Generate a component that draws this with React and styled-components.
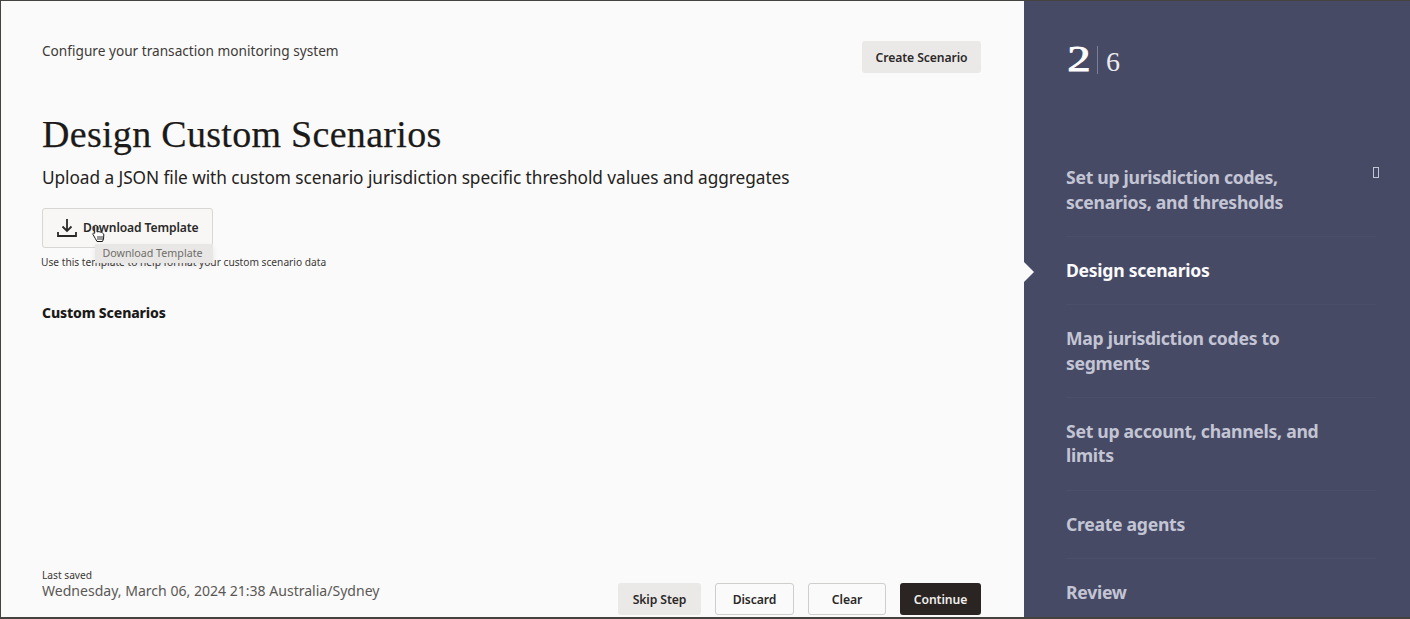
import React from "react";
import styled, { createGlobalStyle } from "styled-components";

const Global = createGlobalStyle`
  html, body { margin: 0; padding: 0; height: 100%; overflow: hidden; background: #fbfafa; }
  #root { height: 100%; }
  * { box-sizing: border-box; }
`;
const Frame = styled.div`
  width: 1410px; height: 619px; display: flex; overflow: hidden;
  border-top: 1px solid #45433f; border-bottom: 2px solid #45433f; border-left: 1px solid #45433f;
  font-family: "Noto Sans", sans-serif; color: #1f1d1b;
`;
const Main = styled.main`
  width: 1023px; flex: none; background: #fbfafa; display: flex; flex-direction: column;
  padding: 40px 43px 2px 41px;
`;
const TopBar = styled.div`display: flex; justify-content: space-between; align-items: flex-start;`;
const Eyebrow = styled.div`font-size: 13.65px; line-height: 20px; color: #3c3a38;`;
const Button = styled.button`
  font-family: inherit; font-weight: 600; font-size: 12.2px; line-height: 16px; letter-spacing: -0.1px;
  height: 32px; width: ${p => p.$w}px; border-radius: 3px; padding: 1px 0 0;
  color: ${p => p.$kind === "primary" ? "#f0eeeb" : "#2b2927"};
  background: ${p => p.$kind === "primary" ? "#2a2522" : p.$kind === "outline" ? "#fbfafa" : "#ebe9e7"};
  border: 1px solid ${p => p.$kind === "outline" ? "#d0cecb" : "transparent"};
`;
const Title = styled.h1`
  margin: 38px 0 0; font: 400 38px/46px "Liberation Serif", serif; color: #1c1a18; letter-spacing: 0.3px;
  -webkit-text-stroke: 0.25px #1c1a18;
`;
const Lead = styled.p`margin: 9px 0 0; font-size: 17.25px; line-height: 24px; color: #242220; letter-spacing: -0.06px;`;
const DownloadWrap = styled.div`position: relative; margin-top: 18px; width: 171px;`;
const Download = styled.button`
  width: 171px; height: 40px; display: flex; align-items: center; gap: 5px; padding: 0 0 0 13px;
  background: #f8f7f6; border: 1px solid #d8d6d3; border-radius: 3px;
  font: 600 12.1px/18px "Noto Sans", sans-serif; color: #2b2927; letter-spacing: -0.1px;
`;
const Tooltip = styled.div`
  position: absolute; left: 53px; top: 36px; width: 118px; height: 19px; background: #e9e7e5;
  padding-right: 3px;
  font-size: 10.7px; line-height: 19px; color: #6f6d6a; text-align: center; white-space: nowrap;
  box-shadow: 0 3px 6px rgba(0,0,0,.08);
`;
const Cursor = styled.svg`position: absolute; left: 50px; top: 16px;`;
const Hint = styled.p`margin: 6px 0 0 -1px; font-size: 10.2px; line-height: 16px; color: #3a3836;`;
const Section = styled.h2`margin: 33px 0 0; font-size: 14px; line-height: 20px; font-weight: 800; color: #1c1a18; letter-spacing: -0.15px;`;
const Footer = styled.div`margin-top: auto; display: flex; justify-content: space-between; align-items: flex-end;`;
const Saved = styled.div`padding-bottom: 15px;`;
const SavedLabel = styled.div`font-size: 10.2px; line-height: 14px; color: #3a3836;`;
const SavedDate = styled.div`font-size: 14.05px; line-height: 18px; color: #5a5855;`;
const Actions = styled.div`display: flex; gap: 14px;`;
const Side = styled.aside`
  position: relative; flex: 1; background: #474a65; padding: 44px 34px 0 42px; overflow: hidden;
`;
const Notch = styled.div`
  position: absolute; left: 0; top: 261px; width: 10px; height: 20px; background: #fbfafa;
  clip-path: polygon(0 0, 100% 50%, 0 100%);
`;
const Counter = styled.div`display: flex; align-items: flex-end; height: 30px; font-family: "Liberation Serif", serif; color: #fff;`;
const Current = styled.span`
  font-size: 36px; line-height: 30px; font-weight: 400; transform: translateY(-1px) scaleX(1.3); transform-origin: left; width: 31px;
  -webkit-text-stroke: 0.8px #fff; padding-left: 1px;
`;
const Sep = styled.span`width: 1px; height: 28px; background: #7c7f96; margin: 0 8px 1px 0;`;
const Total = styled.span`font-size: 28px; line-height: 27px; color: #eceaf0;`;
const Steps = styled.ol`list-style: none; margin: 69px 0 0; padding: 0;`;
const Step = styled.li`
  display: flex; justify-content: space-between; align-items: flex-start;
  padding: 21px 0 21.800px;
  border-bottom: 1px solid #4c4f6a;
  font-size: 17.6px; line-height: 24.5px; font-weight: 700; letter-spacing: -0.28px;
  color: ${p => p.$active ? "#fafafc" : "#c3c5d4"};
  &:last-child { border-bottom: 0; }
`;
const Glyph = styled.span`width: 6px; height: 11px; border: 1px solid #c3c5d4; margin-top: 2px; margin-right: -3px; flex: none;`;

const steps = [
  { t: <>Set up jurisdiction codes,<br />scenarios, and thresholds</>, glyph: true },
  { t: "Design scenarios", active: true },
  { t: <>Map jurisdiction codes to<br />segments</> },
  { t: <>Set up account, channels, and<br />limits</> },
  { t: "Create agents" },
  { t: "Review" },
];

export default function App() {
  return (
    <Frame>
      <Global />
      <Main>
        <TopBar>
          <Eyebrow>Configure your transaction monitoring system</Eyebrow>
          <Button $w={119}>Create Scenario</Button>
        </TopBar>
        <Title>Design Custom Scenarios</Title>
        <Lead>Upload a JSON file with custom scenario jurisdiction specific threshold values and aggregates</Lead>
        <DownloadWrap>
          <Download>
            <svg width="22" height="22" viewBox="0 0 22 22" fill="none" stroke="#2b2927" strokeWidth="1.800">
              <path d="M11 2v12M6.500 9.500 11 14l4.500-4.500M2 15v4h18v-4" />
            </svg>
            <span>Download Template</span>
          </Download>
          <Tooltip>Download Template</Tooltip>
          <Cursor width="14" height="19" viewBox="0 0 14 19">
            <path d="M3 1.500c1-.6 2 0 2 1.200V8l1-.4 1 .1 1.200.3 1.300.5 1.300.6c.7.4 1 1 1 1.800l-.3 4.100-1 2.500H5l-1.700-3L1 10.500c-.5-1 .5-2 1.700-1.200V2.500c0-.4 0-.8.300-1Z" fill="#fff" stroke="#1b1b1b" strokeWidth="1" />
            <path d="M6 12v4M8 12v4M10 12v4" stroke="#1b1b1b" strokeWidth=".9" />
          </Cursor>
        </DownloadWrap>
        <Hint>Use this template to help format your custom scenario data</Hint>
        <Section>Custom Scenarios</Section>
        <Footer>
          <Saved>
            <SavedLabel>Last saved</SavedLabel>
            <SavedDate>Wednesday, March 06, 2024 21:38 Australia/Sydney</SavedDate>
          </Saved>
          <Actions>
            <Button $w={83}>Skip Step</Button>
            <Button $w={79} $kind="outline">Discard</Button>
            <Button $w={78} $kind="outline">Clear</Button>
            <Button $w={81} $kind="primary">Continue</Button>
          </Actions>
        </Footer>
      </Main>
      <Side>
        <Notch />
        <Counter>
          <Current>2</Current>
          <Sep />
          <Total>6</Total>
        </Counter>
        <Steps>
          {steps.map((s, i) => (
            <Step key={i} $active={s.active}>
              <span>{s.t}</span>
              {s.glyph && <Glyph />}
            </Step>
          ))}
        </Steps>
      </Side>
    </Frame>
  );
}
